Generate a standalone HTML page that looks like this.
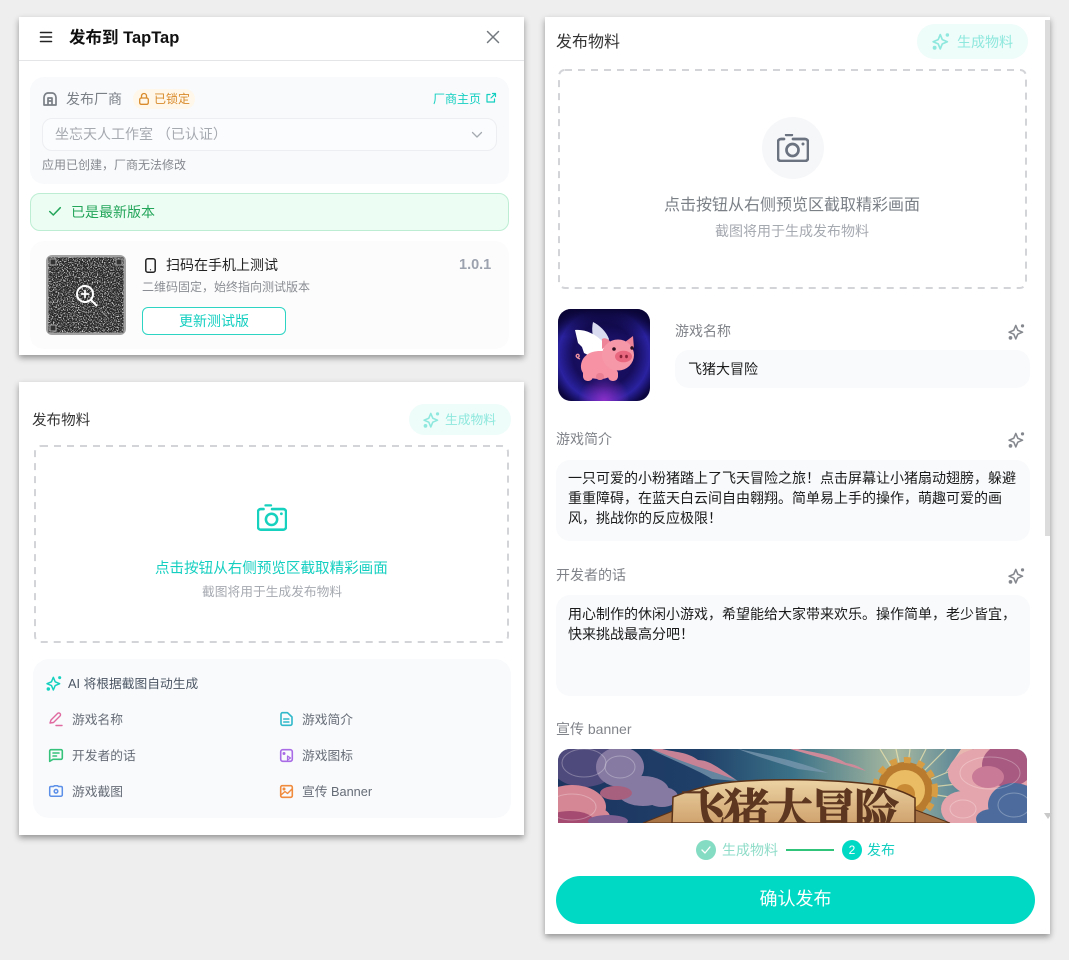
<!DOCTYPE html>
<html lang="zh-CN"><head><meta charset="utf-8"><title>发布到 TapTap</title>
<style>
*{box-sizing:border-box}
html,body{margin:0;padding:0;width:1069px;height:960px;overflow:hidden;background:#eee}
body{position:relative;font-family:"Liberation Sans","Noto Sans CJK SC",sans-serif;color:#222}
.p,.b,.t,svg.i{position:absolute}
.p{background:#fff;box-shadow:0 3px 6px rgba(0,0,0,.38)}
.t{white-space:nowrap;line-height:20px;height:20px}
.g{color:#666c76;font-size:12.74px}
.lab{color:#808389;font-size:14px}
.body{color:#1a1a1a;font-size:14px}
svg.i{fill:none;stroke:currentColor;stroke-width:2;stroke-linecap:round;stroke-linejoin:round;overflow:visible}
</style></head><body>
<svg width="0" height="0" style="position:absolute">
<symbol id="spark" viewBox="0 0 24 24"><path d="M11 3.500l2.800 6.700 6.700 2.800-6.700 2.800L11 22.500l-2.800-6.700-6.700-2.800 6.700-2.800z" fill="none" stroke="currentColor" stroke-width="2.200" stroke-linejoin="round"/><circle cx="20.500" cy="4" r="2.300" fill="currentColor"/><circle cx="3.500" cy="21" r="2.600" fill="currentColor"/></symbol>
<symbol id="cam" viewBox="0 0 32 28"><path d="M7 5H4a3 3 0 0 0-3 3v16a3 3 0 0 0 3 3h24a3 3 0 0 0 3-3V8a3 3 0 0 0-3-3H16" fill="none" stroke="currentColor" stroke-width="2.700" stroke-linecap="round"/><path d="M9 1h6" stroke="currentColor" stroke-width="2.400" stroke-linecap="round"/><circle cx="15.500" cy="16" r="6" fill="none" stroke="currentColor" stroke-width="2.700"/><circle cx="26" cy="10" r="1.500" fill="currentColor"/></symbol>
<filter id="noise" x="0" y="0" width="100%" height="100%" color-interpolation-filters="sRGB"><feTurbulence type="fractalNoise" baseFrequency="0.8" numOctaves="2" seed="7"/><feColorMatrix values="0 0 0 0 .8 0 0 0 0 .8 0 0 0 0 .8 5 0 0 0 -2.450"/></filter>
</svg>

<!-- Panel 1 -->
<div class="p" style="left:19px;top:17px;width:505px;height:338px"></div>
<div class="b" style="left:19px;top:60px;width:505px;height:1px;background:#e4e5e7"></div>
<svg class="i" style="left:40px;top:31px;color:#222" width="12" height="12" viewBox="0 0 12 12"><path d="M.5 1.500h11M.5 6h11M.5 10.500h11" stroke-width="1.600"/></svg>
<div class="t" style="left:69px;top:28px;font-size:16.500px;font-weight:700;color:#111">发布到 TapTap</div>
<svg class="i" style="left:487px;top:31px;color:#74797f" width="12" height="12" viewBox="0 0 12 12"><path d="M.5.500l11 11M11.500.500l-11 11" stroke-width="1.500"/></svg>

<div class="b" style="left:30px;top:77px;width:479px;height:107px;background:#f8fafc;border-radius:14px"></div>
<svg class="i" style="left:43px;top:92px;color:#7b8087" width="14" height="14" viewBox="0 0 14 14"><path d="M1 13V5.500C1 3.500 2.500 1 5 1h4c2.500 0 4 2.500 4 4.500V13zM5 13V6h4v7M5 9h4" stroke-width="1.700"/></svg>
<div class="t" style="left:66px;top:89px;font-size:14px;color:#7b8087">发布厂商</div>
<div class="b" style="left:133px;top:89px;width:62px;height:20px;background:#fff8ea;border-radius:10px"></div>
<svg class="i" style="left:139px;top:93px;color:#d98a2b" width="10" height="12" viewBox="0 0 10 12"><rect x=".7" y="5" width="8.600" height="6.300" rx="1.500" stroke-width="1.300"/><path d="M2.500 5V3a2.500 2.500 0 0 1 5 0v2" stroke-width="1.300"/></svg>
<div class="t" style="left:154px;top:89px;font-size:12px;color:#d98a2b">已锁定</div>
<div class="t" style="left:433px;top:89px;font-size:12px;color:#14cfc0">厂商主页</div>
<svg class="i" style="left:486px;top:93px;color:#14cfc0" width="10" height="10" viewBox="0 0 10 10"><path d="M4 1.500H1v7.500h7.500V6M5 5l4.500-4.500M6.500.500h3v3" stroke-width="1.200"/></svg>
<div class="b" style="left:42px;top:118px;width:455px;height:33px;background:#fbfcfd;border:1px solid #eceef1;border-radius:10px"></div>
<div class="t" style="left:55px;top:124px;font-size:14px;color:#a5a9b0">坐忘天人工作室 （已认证）</div>
<svg class="i" style="left:472px;top:132px;color:#a5a9b0" width="10" height="6" viewBox="0 0 10 6"><path d="M.5.500L5 5 9.500.500" stroke-width="1.300"/></svg>
<div class="t" style="left:42px;top:155px;font-size:12px;color:#86898f">应用已创建，厂商无法修改</div>

<div class="b" style="left:30px;top:193px;width:479px;height:38px;background:#ecfdf3;border:1px solid #bdeed3;border-radius:10px"></div>
<svg class="i" style="left:49px;top:207px;color:#23a55a" width="12" height="9" viewBox="0 0 12 9"><path d="M.7 4.500L4.300 8 11.300.700" stroke-width="1.500"/></svg>
<div class="t" style="left:71px;top:202px;font-size:14px;color:#23a55a">已是最新版本</div>

<div class="b" style="left:30px;top:241px;width:479px;height:108px;background:#fcfcfc;border-radius:14px"></div>
<svg class="b" style="left:46px;top:255px" width="80" height="80" viewBox="0 0 80 80">
<defs><clipPath id="qc"><rect width="80" height="80" rx="6"/></clipPath></defs>
<g clip-path="url(#qc)"><rect width="80" height="80" fill="#a2a2a2"/><rect x="2.500" y="2.500" width="75" height="75" fill="#262626"/><rect x="2.500" y="2.500" width="75" height="75" fill="#fff" filter="url(#noise)"/>
<g fill="#333" stroke="#aaa" stroke-width="1"><rect x="4" y="4" width="6" height="6"/><rect x="70" y="4" width="6" height="6"/><rect x="4" y="70" width="6" height="6"/></g></g>
<circle cx="39" cy="39" r="8" fill="none" stroke="#fff" stroke-width="2"/><path d="M45 45l5.500 5.500" stroke="#fff" stroke-width="2" stroke-linecap="round"/><path d="M35.500 39h7M39 35.500v7" stroke="#fff" stroke-width="1.800" stroke-linecap="round"/></svg>
<svg class="i" style="left:145px;top:258px;color:#222" width="11" height="15" viewBox="0 0 11 15"><rect x=".8" y=".8" width="9.400" height="13.400" rx="2" stroke-width="1.500"/><circle cx="5.500" cy="11.800" r=".3" stroke-width=".7"/></svg>
<div class="t" style="left:166px;top:255px;font-size:14px;color:#222">扫码在手机上测试</div>
<div class="t" style="left:459px;top:255px;font-size:14.500px;font-weight:700;color:#9ca3af">1.0.1</div>
<div class="t" style="left:142px;top:277px;font-size:12px;color:#8a8d93">二维码固定，始终指向测试版本</div>
<div class="b" style="left:142px;top:307px;width:144px;height:28px;background:#fff;border:1px solid #2dd4c4;border-radius:6px"></div>
<div class="t" style="left:179px;top:311px;font-size:14px;color:#14cfc0">更新测试版</div>

<!-- Panel 2 -->
<div class="p" style="left:19px;top:382px;width:505px;height:453px"></div>
<div class="t" style="left:32px;top:411px;font-size:14.560px;color:#333">发布物料</div>
<div class="b" style="left:409px;top:404px;width:102px;height:31px;background:#eefcfa;border-radius:16px"></div>
<svg class="b" style="left:423px;top:411px;color:#8ee8dd" width="17" height="17"><use href="#spark"/></svg>
<div class="t" style="left:445px;top:410px;font-size:12.740px;color:#8ee8dd">生成物料</div>
<svg class="b" style="left:34px;top:445px" width="475" height="198"><rect x="1" y="1" width="473" height="196" rx="6" fill="none" stroke="#d2d4d8" stroke-width="2" stroke-dasharray="7 6"/></svg>
<svg class="b" style="left:257px;top:504px;color:#17d1bf" width="30" height="27"><use href="#cam"/></svg>
<div class="t" style="left:155px;top:559px;font-size:14.560px;color:#14cfc0">点击按钮从右侧预览区截取精彩画面</div>
<div class="t" style="left:202px;top:582px;font-size:12.740px;color:#a5a9b0">截图将用于生成发布物料</div>
<div class="b" style="left:33px;top:659px;width:478px;height:159px;background:#f8fafc;border-radius:16px"></div>
<svg class="b" style="left:46px;top:675px;color:#17d1bf" width="16" height="16"><use href="#spark"/></svg>
<div class="t" style="left:68px;top:674px;font-size:12.740px;color:#4b5563">AI 将根据截图自动生成</div>
<svg class="i" style="left:49px;top:712px;color:#e0699f" width="14" height="14" viewBox="0 0 14 14"><path d="M1 11l1-3 6.500-6.500a1.700 1.700 0 0 1 2.500 2.500L4.500 10.500zM7 13.500h6" stroke-width="1.400"/></svg>
<div class="t g" style="left:72px;top:710px">游戏名称</div>
<svg class="i" style="left:280px;top:712px;color:#2fb8c9" width="13" height="14" viewBox="0 0 13 14"><path d="M1 2.200A1.500 1.500 0 0 1 2.500.700h5L12 5v6.800a1.500 1.500 0 0 1-1.500 1.500h-8A1.500 1.500 0 0 1 1 11.800zM3.800 7h5M3.800 10h5" stroke-width="1.600"/></svg>
<div class="t g" style="left:302px;top:710px">游戏简介</div>
<svg class="i" style="left:49px;top:749px;color:#36c27a" width="14" height="13" viewBox="0 0 14 13"><path d="M2 .700h10a1.300 1.300 0 0 1 1.300 1.300v7a1.300 1.300 0 0 1-1.300 1.300H4L.700 12.300V2A1.300 1.300 0 0 1 2 .700zM4 4h6M4 7h3.500" stroke-width="1.600"/></svg>
<div class="t g" style="left:72px;top:746px">开发者的话</div>
<svg class="i" style="left:280px;top:749px;color:#a96be6" width="13" height="13" viewBox="0 0 13 13"><rect x=".7" y=".7" width="11.600" height="11.600" rx="2" stroke-width="1.600"/><circle cx="4" cy="4.500" r="1" fill="currentColor" stroke-width="1"/><path d="M7.500 7l3 2-3 2z" stroke-width="1.200"/></svg>
<div class="t g" style="left:302px;top:746px">游戏图标</div>
<svg class="i" style="left:49px;top:785px;color:#5b8fe8" width="14" height="12" viewBox="0 0 14 12"><path d="M4.500 1.500L5.500.700h3l1 .8H12A1.300 1.300 0 0 1 13.300 2.800v7A1.300 1.300 0 0 1 12 11.200H2A1.300 1.300 0 0 1 .7 9.800v-7A1.300 1.300 0 0 1 2 1.500z" stroke-width="1.500"/><circle cx="7" cy="6.300" r="1.800" stroke-width="1.500"/></svg>
<div class="t g" style="left:72px;top:782px">游戏截图</div>
<svg class="i" style="left:280px;top:785px;color:#f08a3c" width="13" height="13" viewBox="0 0 13 13"><rect x=".7" y=".7" width="11.600" height="11.600" rx="1.500" stroke-width="1.600"/><circle cx="4" cy="4" r="1.100" fill="currentColor" stroke-width=".8"/><path d="M1 10l4-3.500 2.500 2L12 4" stroke-width="1.400"/></svg>
<div class="t g" style="left:302px;top:782px">宣传 Banner</div>

<!-- Panel 3 -->
<div class="p" style="left:545px;top:17px;width:505px;height:917px"></div>
<div class="b" style="left:1045px;top:20px;width:5px;height:516px;background:#dcdcdc"></div>
<div class="t" style="left:556px;top:33px;font-size:16px;color:#333">发布物料</div>
<div class="b" style="left:917px;top:24px;width:111px;height:35px;background:#eefcfa;border-radius:18px"></div>
<svg class="b" style="left:932px;top:32px;color:#8ee8dd" width="18" height="18"><use href="#spark"/></svg>
<div class="t" style="left:957px;top:32px;font-size:14px;color:#8ee8dd">生成物料</div>
<svg class="b" style="left:558px;top:69px" width="469" height="220"><rect x="1" y="1" width="467" height="218" rx="6" fill="none" stroke="#d2d4d8" stroke-width="2" stroke-dasharray="7 6"/></svg>
<div class="b" style="left:762px;top:117px;width:62px;height:62px;border-radius:50%;background:#f6f7f9"></div>
<svg class="b" style="left:777px;top:134px;color:#6b7280" width="32" height="28"><use href="#cam"/></svg>
<div class="t" style="left:664px;top:196px;font-size:16px;color:#7b8087">点击按钮从右侧预览区截取精彩画面</div>
<div class="t" style="left:715px;top:221px;font-size:14px;color:#a5a9b0">截图将用于生成发布物料</div>

<svg class="b" style="left:558px;top:309px" width="92" height="92" viewBox="0 0 92 92">
<defs>
<clipPath id="pc"><rect width="92" height="92" rx="13"/></clipPath>
<radialGradient id="pg" cx=".5" cy=".5" r=".62"><stop offset="0" stop-color="#1e1470"/><stop offset=".55" stop-color="#160d5c"/><stop offset=".8" stop-color="#2a22a0"/><stop offset="1" stop-color="#0c0640"/></radialGradient>
<radialGradient id="pb" cx=".5" cy="1" r=".28"><stop offset="0" stop-color="#8a2fc8"/><stop offset="1" stop-color="#8a2fc8" stop-opacity="0"/></radialGradient>
<linearGradient id="pt" x1="0" x2="0" y1="0" y2="1"><stop offset="0" stop-color="#0a0535"/><stop offset=".3" stop-color="#0a0535" stop-opacity="0"/></linearGradient>
</defs>
<g clip-path="url(#pc)"><rect width="92" height="92" fill="url(#pg)"/><rect width="92" height="92" fill="url(#pb)"/><rect width="92" height="92" fill="url(#pt)"/>
<path d="M35 13C41 16 48 22 51 30L47 42L39 38C35 31 33 22 35 13Z" fill="#d9dcf0"/>
<path d="M17 21C26 20 37 24 46 34L46 46L35 52L30 46L26 44L24 38L20 34Z" fill="#ffffff"/>
<path d="M22 50c-3-1-5-3-3-4.500 2-1 3 2 1 3" fill="none" stroke="#f0929f" stroke-width="1.400"/>
<path d="M23 56c1-9 9-14 19-14h10l6 20c-3 5-9 8-16 8-12 0-20-5-19-14z" fill="#f692a4"/>
<rect x="25" y="60" width="10" height="12" rx="4.500" fill="#f692a4"/><rect x="50" y="60" width="10" height="12" rx="4.500" fill="#f692a4"/><rect x="38" y="64" width="8" height="7" rx="3.500" fill="#e97f92"/>
<path d="M44 40l0-10c3-2 7 0 9 4zM67 33l8-6 1 12z" fill="#ee8498"/>
<ellipse cx="60" cy="46" rx="16" ry="15.500" fill="#f798a8"/>
<ellipse cx="65.500" cy="47.500" rx="8.500" ry="5.800" fill="#e9687f"/><ellipse cx="63" cy="47.500" rx="1.400" ry="1.700" fill="#8a2238"/><ellipse cx="68.500" cy="47.500" rx="1.400" ry="1.700" fill="#8a2238"/>
<circle cx="56" cy="40" r="1.800" fill="#2a1020"/><circle cx="74" cy="39" r="1.700" fill="#2a1020"/>
</g></svg>

<div class="t lab" style="left:675px;top:321px">游戏名称</div>
<svg class="b" style="left:1008px;top:323px;color:#85888e" width="17" height="17"><use href="#spark"/></svg>
<div class="b" style="left:675px;top:350px;width:355px;height:38px;background:#f8fafc;border-radius:14px"></div>
<div class="t body" style="left:688px;top:359px">飞猪大冒险</div>

<div class="t lab" style="left:556px;top:429px">游戏简介</div>
<svg class="b" style="left:1008px;top:431px;color:#85888e" width="17" height="17"><use href="#spark"/></svg>
<div class="b" style="left:556px;top:460px;width:474px;height:81px;background:#f8fafc;border-radius:14px"></div>
<div class="t body" style="left:568px;top:468px">一只可爱的小粉猪踏上了飞天冒险之旅！点击屏幕让小猪扇动翅膀，躲避</div>
<div class="t body" style="left:568px;top:488px">重重障碍，在蓝天白云间自由翱翔。简单易上手的操作，萌趣可爱的画</div>
<div class="t body" style="left:568px;top:508px">风，挑战你的反应极限！</div>

<div class="t lab" style="left:556px;top:565px">开发者的话</div>
<svg class="b" style="left:1008px;top:567px;color:#85888e" width="17" height="17"><use href="#spark"/></svg>
<div class="b" style="left:556px;top:595px;width:474px;height:101px;background:#f8fafc;border-radius:14px"></div>
<div class="t body" style="left:568px;top:604px">用心制作的休闲小游戏，希望能给大家带来欢乐。操作简单，老少皆宜，</div>
<div class="t body" style="left:568px;top:624px">快来挑战最高分吧！</div>

<div class="t lab" style="left:556px;top:719px">宣传 banner</div>

<svg class="b" style="left:558px;top:749px" width="469" height="74" viewBox="0 0 469 74">
<defs>
<clipPath id="bc"><path d="M12 0H457a12 12 0 0 1 12 12V74H0V12A12 12 0 0 1 12 0z"/></clipPath>
<linearGradient id="bs" x1="0" x2="1" y1="0" y2="0"><stop offset="0" stop-color="#1c3560"/><stop offset=".3" stop-color="#1f3f68"/><stop offset=".5" stop-color="#3b7288"/><stop offset=".72" stop-color="#a9b9a0"/><stop offset=".85" stop-color="#5f8a98"/><stop offset="1" stop-color="#35607f"/></linearGradient>
<linearGradient id="bp" x1="0" x2="0" y1="0" y2="1"><stop offset="0" stop-color="#ecd3a4"/><stop offset="1" stop-color="#d0a36e"/></linearGradient>
</defs>
<g clip-path="url(#bc)">
<rect width="469" height="74" fill="url(#bs)"/>
<path d="M104 0c14 6 30 6 40 14 12 0 24 10 36 18l-26-2c-16-10-38-18-62-30zM180 0c30 6 60 12 90 24l-30-4c-20-6-40-12-60-20z" fill="#7c9ab0" opacity=".75"/>
<path d="M104 0c12 3 26 3 36 11 12 0 22 9 38 20-24-9-52-17-84-31z" fill="#c78296"/>
<path d="M240 0c18 4 36 6 48 14 8 1 14 4 20 8-24-7-48-14-76-22z" fill="#cf8a9a"/>
<g stroke="#efe4ae" stroke-width="1.200" opacity=".75"><path d="M347 41L322 0M347 41L338 0M347 41L352 0M347 41L368 0M347 41L388 0M347 41L402 18M347 41L408 34M347 41L404 50"/></g>
<path d="M387 24l28-24h-12z" fill="#e6b8b0"/>
<circle cx="347" cy="41" r="28" fill="#b97c2e"/><circle cx="347" cy="41" r="30" fill="none" stroke="#d79d44" stroke-width="6" stroke-dasharray="7 7"/><circle cx="347" cy="41" r="20" fill="#eabc64"/><circle cx="347" cy="45" r="10" fill="#c88a35"/>
<ellipse cx="26" cy="14" rx="34" ry="24" fill="#4f4a7c"/>
<g fill="#867aa2"><ellipse cx="62" cy="18" rx="24" ry="20"/><ellipse cx="85" cy="42" rx="26" ry="15"/><ellipse cx="104" cy="48" rx="16" ry="10"/></g>
<ellipse cx="58" cy="44" rx="16" ry="7" fill="#a8607f"/>
<g fill="#d58795"><ellipse cx="14" cy="58" rx="34" ry="22"/><ellipse cx="38" cy="68" rx="14" ry="9"/></g>
<ellipse cx="12" cy="72" rx="24" ry="10" fill="#a54a70"/>
<ellipse cx="50" cy="72" rx="20" ry="6" fill="#7d5f92"/>
<g fill="#e5a5ac"><ellipse cx="432" cy="24" rx="42" ry="26"/><ellipse cx="405" cy="60" rx="22" ry="18"/><ellipse cx="430" cy="50" rx="26" ry="16"/></g>
<ellipse cx="450" cy="16" rx="26" ry="22" fill="#a85a80"/>
<ellipse cx="430" cy="28" rx="16" ry="11" fill="#c97a96"/>
<g fill="#4d6c9d"><ellipse cx="456" cy="56" rx="26" ry="22"/><ellipse cx="434" cy="70" rx="16" ry="10"/></g>
<g fill="none" stroke="#fff" stroke-opacity=".28"><ellipse cx="26" cy="14" rx="22" ry="14"/><ellipse cx="62" cy="18" rx="15" ry="11"/><ellipse cx="14" cy="58" rx="24" ry="13"/><ellipse cx="432" cy="24" rx="30" ry="16"/><ellipse cx="456" cy="56" rx="16" ry="12"/><ellipse cx="405" cy="60" rx="13" ry="9"/></g>
<path d="M85 74l30-12v12zM355 60l37 14h-37z" fill="#a87446" stroke="#5a3218"/>
<path d="M115 48C135 40 155 35 174 33C205 30 265 29 320 36C335 39 347 43 357 49V74H114z" fill="url(#bp)" stroke="#5a3218" stroke-width="1.500"/>
<text x="122" y="78" font-size="46" font-weight="700" textLength="220" lengthAdjust="spacing" fill="#5e3720" stroke="#5e3720" stroke-width=".8" style="font-family:'Liberation Serif','Noto Serif CJK SC',serif">飞猪大冒险</text>
</g></svg>
<svg class="b" style="left:1044px;top:813px" width="8" height="6"><path d="M0 0h8L4 6z" fill="#c9c9c9"/></svg>

<div class="b" style="left:696px;top:840px;width:20px;height:20px;border-radius:50%;background:#84dcc2"></div>
<svg class="i" style="left:701px;top:846px;color:#fff" width="10" height="8" viewBox="0 0 10 8"><path d="M1 4l3 3 5-6" stroke-width="1.300"/></svg>
<div class="t" style="left:722px;top:840px;font-size:14px;color:#8fdcc8">生成物料</div>
<div class="b" style="left:786px;top:849px;width:48px;height:2px;background:#2fc47a"></div>
<div class="b" style="left:842px;top:840px;width:20px;height:20px;border-radius:50%;background:#00d9c4;color:#fff;font-size:12px;line-height:20px;text-align:center">2</div>
<div class="t" style="left:867px;top:840px;font-size:14px;color:#14cfc0">发布</div>
<div class="b" style="left:556px;top:876px;width:479px;height:48px;border-radius:24px;background:#00d9c4;color:#fff;font-size:18px;line-height:47px;text-align:center">确认发布</div>
</body></html>
